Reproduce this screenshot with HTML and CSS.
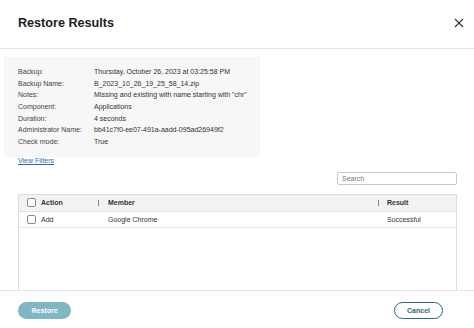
FILE: index.html
```html
<!DOCTYPE html>
<html>
<head>
<meta charset="utf-8">
<link rel="stylesheet" href="styles.css">
</head>
<body>
<div class="dialog">
  <div class="header">
    <h1 class="title">Restore Results</h1>
    <button class="close" aria-label="Close">
      <svg width="10" height="10" viewBox="0 0 10 10"><path d="M1 1 L9 9 M9 1 L1 9" stroke="#333" stroke-width="1.1" fill="none"/></svg>
    </button>
  </div>
  <div class="content">
    <div class="panel">
      <div class="lbl">Backup:</div><div class="val">Thursday, October 26, 2023 at 03:25:58 PM</div>
      <div class="lbl">Backup Name:</div><div class="val">B_2023_10_26_19_25_58_14.zip</div>
      <div class="lbl">Notes:</div><div class="val">Missing and existing with name starting with "chr"</div>
      <div class="lbl">Component:</div><div class="val">Applications</div>
      <div class="lbl">Duration:</div><div class="val">4 seconds</div>
      <div class="lbl">Administrator Name:</div><div class="val">bb41c7f0-ee07-491a-aadd-095ad26949f2</div>
      <div class="lbl">Check mode:</div><div class="val">True</div>
    </div>
    <a class="link" href="#">View Filters</a>
    <div class="searchrow"><div class="search">Search</div></div>
    <div class="table">
      <div class="thead">
        <div class="c1"><span class="cb"></span>Action</div>
        <div class="c2"><span class="sep"></span>Member</div>
        <div class="c3"><span class="sep"></span>Result</div>
      </div>
      <div class="trow">
        <div class="c1"><span class="cb"></span>Add</div>
        <div class="c2">Google Chrome</div>
        <div class="c3">Successful</div>
      </div>
    </div>
  </div>
  <div class="footer">
    <button class="btn primary">Restore</button>
    <button class="btn outline">Cancel</button>
  </div>
</div>
</body>
</html>
```

FILE: styles.css
```css
* { box-sizing: border-box; }
html, body { margin: 0; padding: 0; background: #fff; }
body { font-family: "Liberation Sans", Arial, sans-serif; color: #333; }
.dialog { width: 474px; height: 328px; display: flex; flex-direction: column; }
.header { height: 49px; border-bottom: 1px solid #e4e4e4; display: flex; align-items: center; justify-content: space-between; padding: 0 10px 2px 18px; }
.title { margin: 0; font-size: 12.6px; font-weight: 700; color: #1e1e1e; }
.close { border: 0; background: none; padding: 0; width: 10px; height: 10px; display: flex; margin-top: 0; margin-right: 0; }
.content { flex: 1; display: flex; flex-direction: column; padding: 0 17px 0 18px; min-height: 0; }
.panel { margin: 8px 0 0 -14px; width: 256px; background: #f7f7f7; padding: 9px 0 9px 14px; display: grid; grid-template-columns: 76px 1fr; font-size: 7px; line-height: 11.67px; }
.lbl { color: #444; }
.val { color: #333; }
.link { font-size: 7px; line-height: 8px; color: #2f6db3; text-decoration: underline; align-self: flex-start; }
.searchrow { display: flex; justify-content: flex-end; margin-top: 7px; }
.search { width: 120px; height: 13px; border: 1px solid #c8c8c8; border-radius: 2px; font-size: 7px; line-height: 11px; color: #777; padding-left: 4px; }
.table { margin-top: 9px; flex: 1; border: 1px solid #dedede; border-bottom: 0; font-size: 7px; }
.thead, .trow { display: flex; align-items: center; }
.thead { height: 17px; background: #f3f3f3; border-bottom: 1px solid #e2e2e2; font-weight: 700; color: #333; }
.trow { height: 16px; border-bottom: 1px solid #e4e4e4; color: #333; }
.c1 { width: 79px; display: flex; align-items: center; padding-left: 8px; }
.c2 { flex: 1; display: flex; align-items: center; position: relative; padding-left: 10px; }
.c3 { width: 78px; display: flex; align-items: center; position: relative; padding-left: 9px; }
.cb { width: 9px; height: 9px; border: 1px solid #8a8a8a; border-radius: 2px; background: #fff; margin-right: 5px; }
.sep { position: absolute; left: 0; top: 50%; margin-top: -3px; width: 1px; height: 6px; background: #888; }
.footer { height: 38px; border-top: 1px solid #e4e4e4; display: flex; justify-content: space-between; align-items: flex-start; padding: 11px 31px 0 18px; }
.btn { height: 17px; border-radius: 9px; font-family: "Liberation Sans", Arial, sans-serif; font-size: 7px; font-weight: 700; padding: 0; cursor: pointer; }
.primary { width: 53px; background: #7fb7c4; color: #fff; border: 0; }
.outline { width: 49px; background: #fff; color: #266b7c; border: 1.5px solid #266b7c; }
```
